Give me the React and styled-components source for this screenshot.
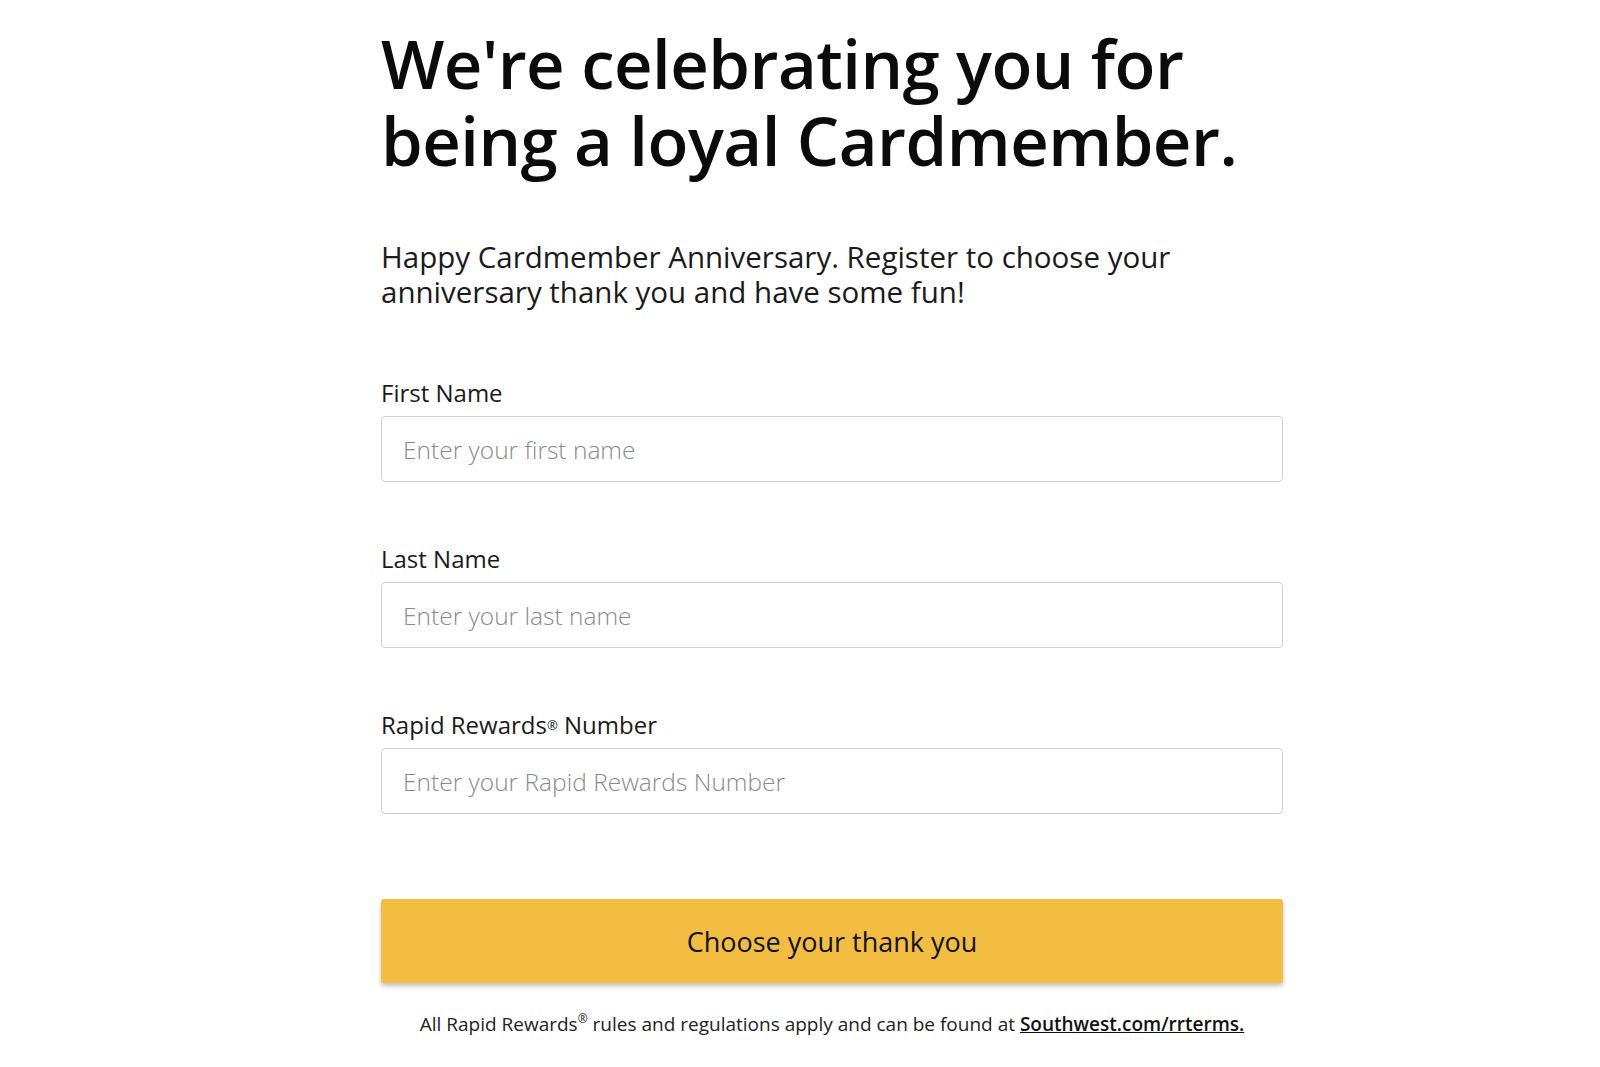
import React from 'react';
import styled, { createGlobalStyle } from 'styled-components';

const GlobalStyle = createGlobalStyle`
  html, body {
    margin: 0;
    padding: 0;
    background: #fff;
  }
  body {
    font-family: "Open Sans", "Noto Sans", sans-serif;
    color: #111;
  }
  * {
    box-sizing: border-box;
  }
`

const Page = styled.main`
  padding: 25px 0 40px 381px;
`

const Content = styled.div`
  width: 902px;
  display: flex;
  flex-direction: column;
`

const Headline = styled.h1`
  margin: 0;
  font-size: 67px;
  line-height: 77px;
  font-weight: 600;
  letter-spacing: -0.5px;
  color: #0b0b0b;
`

const Intro = styled.p`
  margin: 60px 0 0;
  font-size: 29.5px;
  line-height: 35px;
  font-weight: 400;
  color: #1a1a1a;
  max-width: 820px;
`

const Form = styled.form`
  margin-top: 70px;
  display: flex;
  flex-direction: column;
  gap: 63px;
`

const Field = styled.div`
  display: flex;
  flex-direction: column;
  gap: 9px;
`

const Label = styled.label`
  font-size: 24px;
  line-height: 28px;
  color: #1a1a1a;
  sup {
    font-size: 13px;
    vertical-align: 4px;
  }
`

const Input = styled.input`
  height: 66px;
  width: 100%;
  border: 1px solid #cfcfcf;
  border-radius: 4px;
  padding: 0 21px;
  font-family: inherit;
  font-size: 24.5px;
  color: #333;
  outline: none;
  &::placeholder {
    color: #8a8a8a;
    font-weight: 300;
  }
`

const Submit = styled.button`
  margin-top: 22px;
  height: 84px;
  width: 100%;
  border: none;
  border-radius: 3px;
  background: #f3bd42;
  box-shadow: 0 3px 5px rgba(0, 0, 0, 0.25);
  font-family: inherit;
  font-size: 27px;
  font-weight: 400;
  color: #111;
  cursor: pointer;
`

const Terms = styled.p`
  margin: 24px 0 0;
  text-align: center;
  font-size: 19px;
  line-height: 24px;
  color: #222;
  sup {
    font-size: 12px;
    vertical-align: 8px;
  }
  a {
    color: #111;
    font-weight: 600;
    text-decoration: underline;
  }
`

const fields = [
  { id: 'first', label: 'First Name', placeholder: 'Enter your first name' },
  { id: 'last', label: 'Last Name', placeholder: 'Enter your last name' },
  {
    id: 'rr',
    label: (
      <>
        Rapid Rewards<sup>®</sup> Number
      </>
    ),
    placeholder: 'Enter your Rapid Rewards Number',
  },
]

const App = () => {
  return (
    <>
      <GlobalStyle />
      <Page>
        <Content>
          <Headline>
            We're celebrating you for
            <br />
            being a loyal Cardmember.
          </Headline>
          <Intro>
            Happy Cardmember Anniversary. Register to choose your anniversary thank you and have some fun!
          </Intro>
          <Form onSubmit={e => e.preventDefault()}>
            {fields.map(f => (
              <Field key={f.id}>
                <Label htmlFor={f.id}>{f.label}</Label>
                <Input id={f.id} type="text" placeholder={f.placeholder} />
              </Field>
            ))}
            <div>
              <Submit type="submit">Choose your thank you</Submit>
              <Terms>
                All Rapid Rewards<sup>®</sup> rules and regulations apply and can be found at{' '}
                <a href="#">Southwest.com/rrterms.</a>
              </Terms>
            </div>
          </Form>
        </Content>
      </Page>
    </>
  );
};

export default App;
